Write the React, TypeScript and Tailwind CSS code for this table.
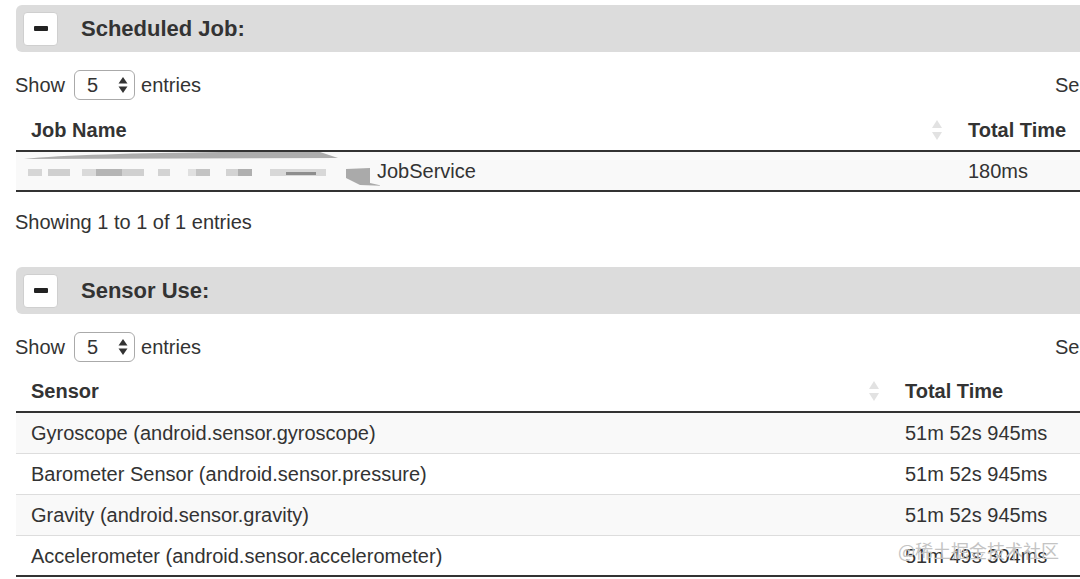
import { ReactNode } from "react";

const sensors = [
  { name: "Gyroscope (android.sensor.gyroscope)", time: "51m 52s 945ms" },
  { name: "Barometer Sensor (android.sensor.pressure)", time: "51m 52s 945ms" },
  { name: "Gravity (android.sensor.gravity)", time: "51m 52s 945ms" },
  { name: "Accelerometer (android.sensor.accelerometer)", time: "51m 49s 304ms" },
];

function SortIcon() {
  return (
    <svg width="12" height="22" viewBox="0 0 12 22" className="shrink-0">
      <path d="M6 1 L11 9 L1 9 Z" fill="#e2e2e2" />
      <path d="M6 21 L11 13 L1 13 Z" fill="#e2e2e2" />
    </svg>
  );
}

function SectionBar({ title }: { title: string }) {
  return (
    <div className="h-[47px] bg-[#dcdcdc] rounded-l-md flex items-center pl-[7px]">
      <div className="w-[35px] h-[34px] bg-white border border-[#cfcfcf] rounded flex items-center justify-center">
        <div className="w-[14px] h-[5px] bg-[#222] rounded-[1px]" />
      </div>
      <span className="ml-[23px] text-[22px] font-bold text-[#333]">{title}</span>
    </div>
  );
}

function ShowEntries() {
  return (
    <div className="h-[30px] flex items-center text-[20px] -ml-px">
      <div className="w-[1040px] flex items-center">
        <span>Show</span>
        <div className="ml-[9px] w-[61px] h-[30px] border border-[#aaa] rounded-md flex items-center pl-[12px] pr-[6px] justify-between">
          <span>5</span>
          <svg width="10" height="18" viewBox="0 0 10 18">
            <path d="M5 1 L9.5 7.5 L0.5 7.5 Z" fill="#333" />
            <path d="M5 17 L9.5 10.5 L0.5 10.5 Z" fill="#333" />
          </svg>
        </div>
        <span className="ml-[6px]">entries</span>
      </div>
      <span>Search:</span>
    </div>
  );
}

function HeaderRow({ first, firstWidth }: { first: string; firstWidth: string }) {
  return (
    <div className="h-[42px] flex items-center border-b-2 border-[#333] font-bold text-[20px]">
      <div className={`${firstWidth} flex items-center justify-between pl-[15px] pr-[10px]`}>
        <span>{first}</span>
        <SortIcon />
      </div>
      <div className="pl-[15px]">Total Time</div>
    </div>
  );
}

function Redacted() {
  return (
    <svg width="360" height="38" viewBox="0 0 360 38" className="absolute left-[4px] top-0">
      <path d="M4 7 C40 3 120 1 200 0 L300 0 L318 6 L4 7 Z" fill="#9a9a9a" opacity="0.8" />
      <rect x="8" y="17" width="14" height="7" fill="#d6d6d6" />
      <rect x="28" y="17" width="22" height="7" fill="#cfcfcf" />
      <rect x="62" y="17" width="14" height="7" fill="#dadada" />
      <rect x="76" y="17" width="26" height="7" fill="#b5b5b5" />
      <rect x="102" y="17" width="22" height="7" fill="#d0d0d0" />
      <rect x="138" y="17" width="12" height="7" fill="#d3d3d3" />
      <rect x="168" y="17" width="8" height="7" fill="#e0e0e0" />
      <rect x="176" y="17" width="14" height="7" fill="#c4c4c4" />
      <rect x="206" y="17" width="12" height="7" fill="#d3d3d3" />
      <rect x="218" y="17" width="14" height="7" fill="#b0b0b0" />
      <rect x="250" y="17" width="56" height="7" fill="#d8d8d8" />
      <rect x="266" y="20" width="30" height="3" fill="#8e8e8e" />
      <path d="M326 17 L350 16 L350 31 L364 34 L340 33 L326 26 Z" fill="#aaaaaa" />
    </svg>
  );
}

function Cell({ children, className }: { children: ReactNode; className?: string }) {
  return <div className={`pl-[15px] ${className ?? ""}`}>{children}</div>;
}

export default function App() {
  return (
    <div className="relative w-[1080px] h-[579px] overflow-hidden bg-white text-[#333] font-['Liberation_Sans',Arial,sans-serif]">
      <div className="w-[1130px] pl-4 pt-[5px]">
        {/* Scheduled Job */}
        <SectionBar title="Scheduled Job:" />
        <div className="mt-[18px]">
          <ShowEntries />
        </div>
        <div className="mt-[10px]">
          <HeaderRow first="Job Name" firstWidth="w-[937px]" />
          <div className="relative h-[40px] flex items-center bg-[#f9f9f9] border-b-2 border-[#333] text-[20px]">
            <Redacted />
            <div className="w-[937px] pl-[361px]">JobService</div>
            <Cell>180ms</Cell>
          </div>
        </div>
        <div className="mt-[18px] h-[24px] leading-[24px] text-[20px] -ml-px">Showing 1 to 1 of 1 entries</div>

        {/* Sensor Use */}
        <div className="mt-[33px]">
          <SectionBar title="Sensor Use:" />
        </div>
        <div className="mt-[18px]">
          <ShowEntries />
        </div>
        <div className="mt-[9px]">
          <HeaderRow first="Sensor" firstWidth="w-[874px]" />
          {sensors.map((s, i) => (
            <div
              key={s.name}
              className={`h-[41px] flex items-center text-[20px] ${
                i % 2 === 0 ? "bg-[#f9f9f9]" : "bg-white"
              } ${i === sensors.length - 1 ? "border-b-2 border-[#333]" : "border-b border-[#dddddd]"}`}
            >
              <Cell className="w-[874px]">{s.name}</Cell>
              <Cell>{s.time}</Cell>
            </div>
          ))}
        </div>
      </div>

      {/* watermark */}
      <div className="absolute left-[898px] top-[541px] text-[18px] text-[#c4c4c4] font-['Noto_Sans_CJK_SC',sans-serif] leading-none">
        @稀土掘金技术社区
      </div>
    </div>
  );
}
